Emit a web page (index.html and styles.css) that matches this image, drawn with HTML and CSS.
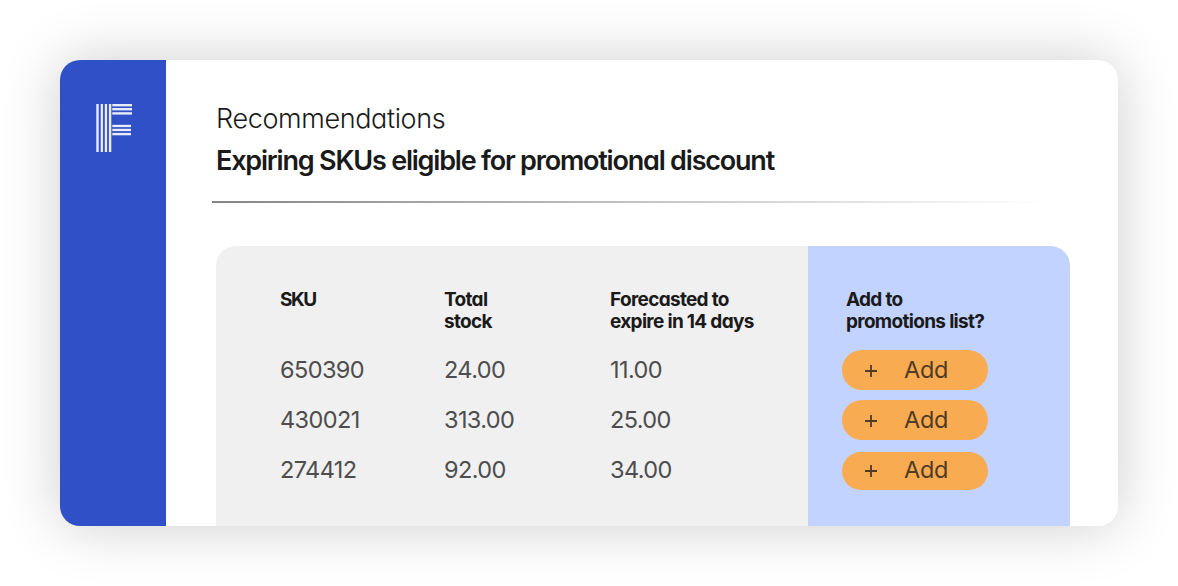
FILE: index.html
```html
<!DOCTYPE html>
<html lang="en">
<head>
    <meta charset="UTF-8">
    <title>Recommendations</title>
    <link rel="stylesheet" href="styles.css">
</head>
<body>
    <div class="card">
        <div class="sidebar">
            <svg class="logo" width="36" height="48" viewBox="0 0 36 48">
                <!-- stem -->
                <g fill="#e9ecf9">
                    <rect x="0.3" y="0" width="2.4" height="48"/>
                    <rect x="4.7" y="0" width="2.3" height="48"/>
                    <rect x="8.8" y="0" width="2.3" height="48"/>
                    <rect x="12.9" y="0" width="2.4" height="48"/>
                </g>
                <!-- arms -->
                <g fill="#e9ecf9">
                    <rect x="16.3" y="0" width="19.7" height="2.4"/>
                    <rect x="16.3" y="4" width="19.7" height="2.4"/>
                    <rect x="16.3" y="8.2" width="19.7" height="2.4"/>
                    <rect x="16.3" y="20.8" width="18.7" height="2.3"/>
                    <rect x="16.3" y="24.8" width="18.7" height="2.3"/>
                    <rect x="16.3" y="28.9" width="18.7" height="2.4"/>
                </g>
            </svg>
        </div>

        <div class="main">
            <h2 class="section">Recommendations</h2>
            <h1 class="title">Expiring SKUs eligible for promotional discount</h1>
            <div class="divider"></div>

            <table class="sku-table">
                <thead>
                    <tr>
                        <th class="col-sku">SKU</th>
                        <th class="col-stock">Total<br>stock</th>
                        <th class="col-forecast">Forecasted to<br>expire in 14 days</th>
                        <th class="col-add">Add to<br>promotions list?</th>
                    </tr>
                </thead>
                <tbody>
                    <tr>
                        <td class="col-sku">650390</td>
                        <td>24.00</td>
                        <td>11.00</td>
                        <td class="col-add"><button class="add"><svg class="plus" width="12" height="12" viewBox="0 0 12 12"><path d="M6 0v12M0 6h12"/></svg>Add</button></td>
                    </tr>
                    <tr>
                        <td class="col-sku">430021</td>
                        <td>313.00</td>
                        <td>25.00</td>
                        <td class="col-add"><button class="add"><svg class="plus" width="12" height="12" viewBox="0 0 12 12"><path d="M6 0v12M0 6h12"/></svg>Add</button></td>
                    </tr>
                    <tr class="last">
                        <td class="col-sku">274412</td>
                        <td>92.00</td>
                        <td>34.00</td>
                        <td class="col-add"><button class="add"><svg class="plus" width="12" height="12" viewBox="0 0 12 12"><path d="M6 0v12M0 6h12"/></svg>Add</button></td>
                    </tr>
                </tbody>
            </table>
        </div>
    </div>
</body>
</html>
```

FILE: styles.css
```css
* {
    box-sizing: border-box;
}

body {
    margin: 0;
    padding: 60px;
    height: 586px;
    background: white;
    color: #1a1a1a;
    font-family: Inter, "Liberation Sans", sans-serif;
    font-feature-settings: "cv11";
    overflow: hidden;
}

.card {
    display: flex;
    width: 1058px;
    height: 466px;
    border-radius: 20px;
    background: white;
    overflow: hidden;
    box-shadow: 0 0 60px rgba(0, 0, 0, 0.2);
}

.sidebar {
    width: 106px;
    padding: 44px 0 0 36px;
    background: #2f50c7;
}

.logo {
    display: block;
}

.main {
    flex: 1;
    padding: 38px 48px 0 50px;
}

.section,
.title {
    margin: 0;
    font-size: 27px;
    line-height: 42px;
    white-space: nowrap;
}

.section {
    font-weight: 300;
    letter-spacing: -0.37px;
}

.title {
    font-weight: 600;
    letter-spacing: -1.2px;
}

.divider {
    width: 834px;
    height: 2px;
    margin: 19px 0 43px -4px;
    background: linear-gradient(to right, #858585, #ffffff);
}

.sku-table {
    width: 854px;
    height: 280px;
    table-layout: fixed;
    border-collapse: separate;
    border-spacing: 0;
    border-radius: 20px 20px 0 0;
    background: #f0f0f0;
    overflow: hidden;
}

th,
td {
    padding: 0;
    text-align: left;
    vertical-align: top;
    white-space: nowrap;
}

th {
    height: 99px;
    padding-top: 43px;
    font-size: 19px;
    font-weight: 650;
    line-height: 22px;
    letter-spacing: -0.68px;
}

td {
    height: 50px;
    color: #4d4d4d;
    font-size: 23.5px;
    line-height: 50px;
    letter-spacing: -0.6px;
}

.col-sku {
    width: 228px;
    padding-left: 64px;
}

th.col-sku {
    letter-spacing: -1.4px;
}

.col-stock {
    width: 166px;
}

.col-forecast {
    width: 198px;
}

.col-add {
    padding-left: 38px;
    background: #c3d3ff;
}

td.col-add {
    padding: 5px 0 0 34px;
}

.add {
    display: flex;
    align-items: center;
    gap: 27px;
    width: 146px;
    height: 40px;
    padding: 0 0 0 23px;
    border: none;
    border-radius: 20px;
    background: #f9ab51;
    color: #4f3b24;
    font: inherit;
    font-feature-settings: inherit;
    letter-spacing: -0.3px;
    line-height: 40px;
    cursor: pointer;
}

.plus {
    margin-top: 2px;
    fill: none;
    stroke: currentColor;
    stroke-width: 1.8;
}

.last td {
    height: 81px;
}

.last td.col-add {
    padding-top: 7px;
}

.last .add {
    height: 38px;
    padding-bottom: 2px;
    line-height: 36px;
}
```
